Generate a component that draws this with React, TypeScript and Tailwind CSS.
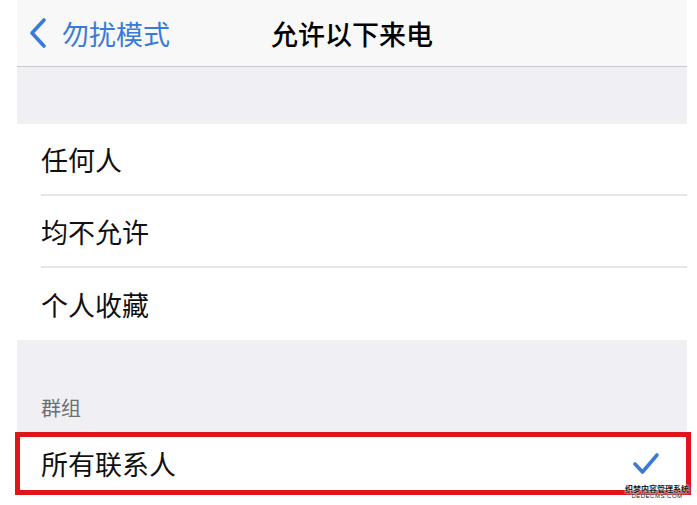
import React from 'react';

const font = { fontFamily: '"Noto Sans CJK SC", "Noto Sans", sans-serif' };

const options = ['任何人', '均不允许', '个人收藏'];

const App: React.FC = () => {
  return (
    <div className="relative w-[697px] h-[505px] bg-white overflow-hidden" style={font}>
      <div className="ml-[17px] w-[670px]">
        {/* Nav bar */}
        <div className="relative h-[67px] bg-[#f8f8f9] border-b border-[#c9c9cd] flex items-center">
          <div className="flex items-center pl-[11px] text-[#3a7bd5]">
            <svg width="20" height="32" viewBox="0 0 20 32" fill="none">
              <path d="M16 3 L4 16 L16 29" stroke="#3a7bd5" strokeWidth="3.6" strokeLinecap="round" strokeLinejoin="round" />
            </svg>
            <span className="ml-[14px] text-[27px] leading-none tracking-[0px]">勿扰模式</span>
          </div>
          <div className="absolute inset-0 flex items-center justify-center pointer-events-none">
            <span className="text-[27px] leading-none font-medium text-black">允许以下来电</span>
          </div>
        </div>

        <div className="h-[57px] bg-[#efeff4]" />

        {/* Options */}
        <div className="bg-white">
          {options.map((o, i) => (
            <div key={o} className="h-[72px] pl-[24px] flex items-stretch">
              <div className={`flex-1 flex items-center ${i < options.length - 1 ? 'border-b-2 border-[#e6e6ea]' : ''}`}>
                <span className="text-[27px] leading-none text-[#111]">{o}</span>
              </div>
            </div>
          ))}
        </div>

        {/* Group header */}
        <div className="h-[92px] bg-[#efeff4] flex items-end pl-[24px] pb-[14px]">
          <span className="text-[20px] leading-none text-[#6d6d72]">群组</span>
        </div>
      </div>

      {/* Highlighted row */}
      <div className="ml-[15px] w-[676px] h-[63px] border-[5px] border-[#e1141b] bg-white flex items-center justify-between pl-[21px] pr-[26px]">
        <span className="text-[27px] leading-none text-[#111]">所有联系人</span>
        <svg width="28" height="24" viewBox="0 0 28 24" fill="none">
          <path d="M3 12 L10.5 20 L25 3" stroke="#3a7bd5" strokeWidth="3.6" strokeLinecap="round" strokeLinejoin="round" />
        </svg>
      </div>

      {/* Watermark */}
      <div className="absolute right-[8px] bottom-[6px] flex flex-col items-center leading-none text-[#222] [text-shadow:0_0_2px_#fff,0_0_2px_#fff]">
        <span className="text-[8px] font-bold">织梦内容管理系统</span>
        <span className="text-[6px] tracking-[0.5px]" style={{ fontFamily: '"Liberation Sans", sans-serif' }}>DEDECMS.COM</span>
      </div>
    </div>
  );
};

export default App;
